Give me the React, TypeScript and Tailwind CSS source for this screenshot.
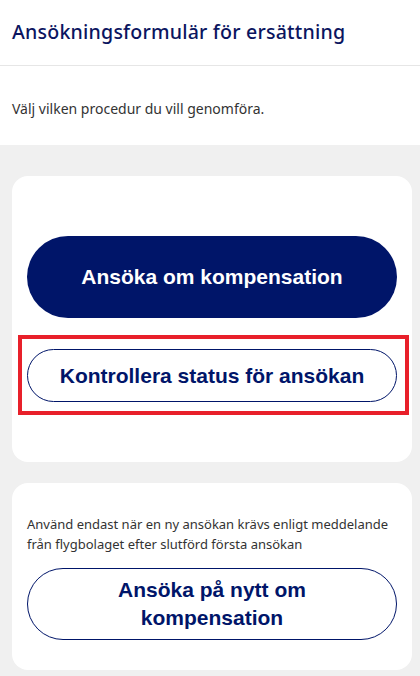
export default function App() {
  return (
    <div className="w-[420px] h-[676px] overflow-hidden bg-[#f0f0f0] font-['Noto_Sans',sans-serif]">
      {/* Header */}
      <div className="bg-white h-[66px] border-b border-[#e6e6e6] flex items-center px-3">
        <h1 className="text-[19.6px] text-[#0b1560] tracking-[0.2px] font-medium pb-[1px]">
          Ansökningsformulär för ersättning
        </h1>
      </div>

      {/* Intro */}
      <div className="bg-white h-[79px] px-3 flex items-center pt-[5px]">
        <p className="text-[14px] text-[#333]">Välj vilken procedur du vill genomföra.</p>
      </div>

      <div className="pl-3 pr-2 pt-[31px] flex flex-col gap-[21px]">
        {/* Card 1 */}
        <div className="bg-white rounded-2xl px-[15px] pt-[60px] pb-[60px] flex flex-col">
          <button className="h-[82px] w-full rounded-full bg-[#001569] text-white text-[21px] font-bold font-['Liberation_Sans',Arial,sans-serif]">
            Ansöka om kompensation
          </button>
          <div className="relative mt-[31px]">
            <button className="h-[53px] w-full rounded-full border border-[#001569] bg-white text-[#001569] text-[21px] font-bold font-['Liberation_Sans',Arial,sans-serif]">
              Kontrollera status för ansökan
            </button>
            {/* highlight frame */}
            <div className="absolute -left-[9px] -right-[12px] -top-[14px] -bottom-[13px] border-4 border-[#e8202a] pointer-events-none" />
          </div>
        </div>

        {/* Card 2 */}
        <div className="bg-white rounded-2xl px-[15px] pt-[31px] pb-[30px] flex flex-col">
          <p className="text-[13px] leading-[20px] text-[#333]">
            Använd endast när en ny ansökan krävs enligt meddelande från flygbolaget efter slutförd första ansökan
          </p>
          <button className="mt-[14px] h-[72px] w-full rounded-full border border-[#001569] bg-white text-[#001569] text-[21px] leading-[28px] font-bold font-['Liberation_Sans',Arial,sans-serif] px-20">
            Ansöka på nytt om kompensation
          </button>
        </div>
      </div>
    </div>
  )
}
